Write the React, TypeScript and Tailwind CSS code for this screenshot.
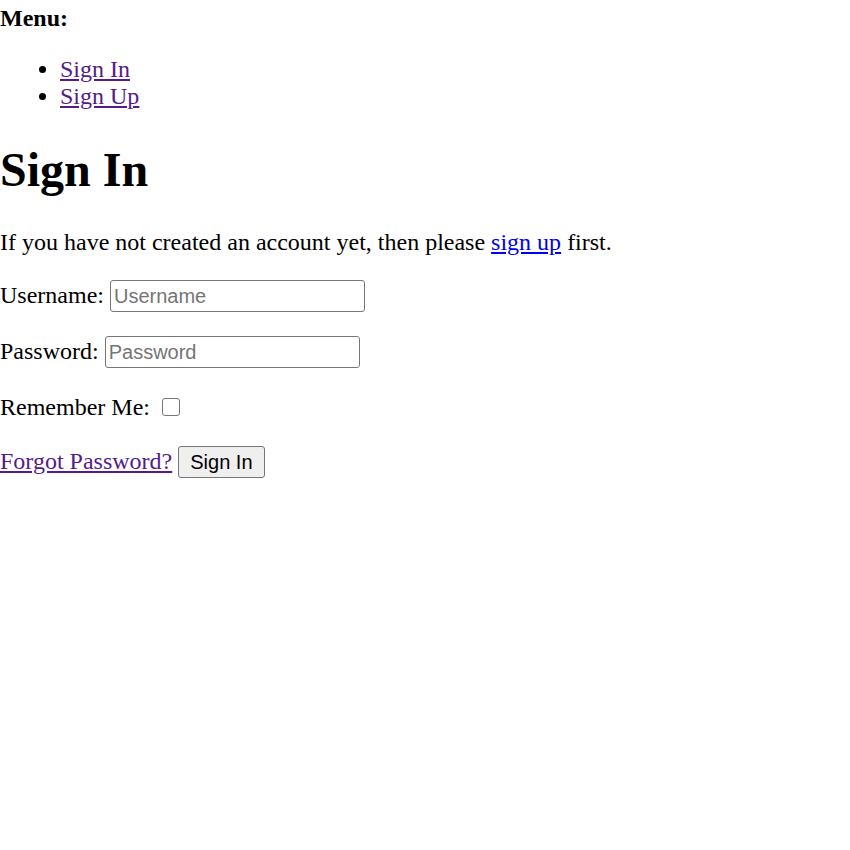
import React from "react";

const serif = "font-['Liberation_Serif','Times_New_Roman',serif]";
const sans = "font-['Liberation_Sans',Arial,sans-serif]";

const inputCls = `${sans} w-[255px] h-[32px] px-[3px] py-[1px] text-[20px] leading-[normal] text-black border border-[#767676] rounded-[3px] bg-white placeholder:text-[#757575] align-baseline`;

export default function App() {
  return (
    <div className={`${serif} text-[24px] leading-[normal] text-black bg-white min-h-[850px] pt-[5px]`}>
      {/* Menu */}
      <b className="font-bold">Menu:</b>
      <ul className="list-disc pl-[60px] my-[24px]">
        <li>
          <a href="#signin" className="text-[#551A8B] underline">Sign In</a>
        </li>
        <li>
          <a href="#signup" className="text-[#551A8B] underline">Sign Up</a>
        </li>
      </ul>

      <h1 className="text-[48px] font-bold my-[32px] leading-[normal]">Sign In</h1>

      <p className="my-[24px]">
        If you have not created an account yet, then please{" "}
        <a href="#signup" className="text-[#0000EE] underline">sign up</a> first.
      </p>

      <form onSubmit={(e) => e.preventDefault()}>
        <p className="my-[24px]">
          Username: <input type="text" placeholder="Username" className={inputCls} />
        </p>
        <p className="my-[24px]">
          Password: <input type="password" placeholder="Password" className={inputCls} />
        </p>
        <p className="mt-[26px] mb-[24px]">
          Remember Me:{" "}
          <input
            type="checkbox"
            className="appearance-none w-[18px] h-[18px] ml-[6px] mr-[4px] border border-[#767676] rounded-[3px] bg-white align-[-1px]"
          />
        </p>
        <p className="mt-[25px] mb-[24px]">
          <a href="#forgot" className="text-[#551A8B] underline">Forgot Password?</a>{" "}
          <button
            type="submit"
            className={`${sans} text-[20px] leading-[normal] h-[32px] px-[11px] bg-[#efefef] border border-[#767676] rounded-[3px] text-black`}
          >
            Sign In
          </button>
        </p>
      </form>
    </div>
  );
}
